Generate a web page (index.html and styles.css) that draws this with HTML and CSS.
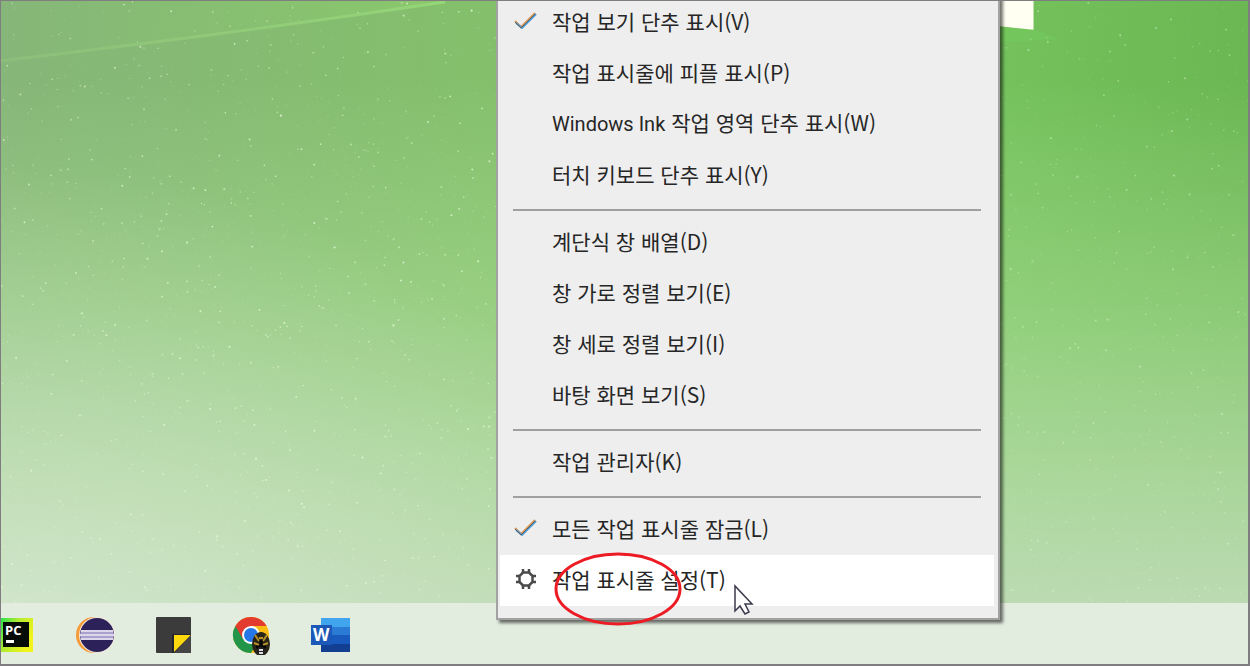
FILE: index.html
```html
<!DOCTYPE html>
<html lang="ko">
<head>
<meta charset="utf-8">
<title>작업 표시줄 메뉴</title>
<link rel="stylesheet" href="styles.css">
</head>
<body>
<main class="desktop">
  <svg class="wallpaper" viewBox="0 0 1250 666" preserveAspectRatio="none" aria-hidden="true">
    <defs>
      <linearGradient id="beam"><stop offset="0" stop-color="#9ad080" stop-opacity=".3"/><stop offset="1" stop-color="#96d878" stop-opacity=".9"/></linearGradient>
      <linearGradient id="glow"><stop offset="0" stop-color="#8cc474" stop-opacity="0"/><stop offset="1" stop-color="#8ccb6c" stop-opacity=".7"/></linearGradient>
    </defs>
    <path d="M0 0H450L0 60Z" fill="url(#glow)"/>
    <path d="M0 60Q230 33 445 1" fill="none" stroke="url(#beam)" stroke-width="3"/>
    <path d="M990 24L1036 29L1060 38L1000 42Z" fill="#72cb5c" opacity=".5"/>
    <path d="M990 0H1035V29L990 24Z" fill="#fffff2"/>
    <g id="specks" fill="#e2f9d4"></g>
  </svg>

  <nav class="taskbar" aria-label="작업 표시줄">
    <button class="app" aria-label="PyCharm">
      <svg viewBox="0 0 40 40"><defs><linearGradient id="pc" x2="1" y2=".5"><stop offset="0" stop-color="#12e052"/><stop offset=".5" stop-color="#b4ec30"/><stop offset="1" stop-color="#f2f21c"/></linearGradient></defs>
        <path d="M0 3H35V37H0Z" fill="url(#pc)"/><path d="M5 7H31V32H5Z" fill="#070b08"/><text x="7" y="20" class="pc-text">PC</text><path d="M8 25H16V28H8Z" fill="#fff"/></svg>
    </button>
    <button class="app" aria-label="Eclipse">
      <svg viewBox="0 0 40 40"><circle cx="18" cy="20" r="18" fill="#f49a36"/><circle cx="21" cy="20" r="18" fill="#f3e8dc"/><circle cx="21" cy="20" r="17" fill="#2c2158"/><path d="M5 15H37L38 20L37 25H5L4 20Z" fill="#a9a0cb"/><path d="M5 16H37M4 20H38M5 24H37" stroke="#dcd7ea" stroke-width="2"/></svg>
    </button>
    <button class="app" aria-label="스티커 메모">
      <svg viewBox="0 0 40 40"><rect x="2" y="2" width="35" height="36" rx="1" fill="#3b3b3b"/><path d="M18 19H37V38H18Z" fill="#24242c"/><path d="M20 20H37L20 37Z" fill="#ffd80d"/><path d="M37 20V38H20Z" fill="#454545"/></svg>
    </button>
    <button class="app" aria-label="Chrome">
      <svg viewBox="0 0 40 40"><circle cx="19" cy="20" r="18" fill="#fbbc12"/><path d="M19 20L3.400 11A18 18 0 0 0 19 38L27 24Z" fill="#229548"/><path d="M19 11H34.600A18 18 0 0 0 3.400 11L11 24Z" fill="#e33b2e"/><circle cx="19" cy="20" r="9" fill="#fff"/><circle cx="19" cy="20" r="7" fill="#2677e8"/>
        <ellipse cx="29" cy="29" rx="9" ry="12" fill="#292416"/><path d="M23 20L27 26M35 20L31 26M22 28L27 30M36 28L31 30M27 23H31" stroke="#b7922a" stroke-width="2"/><path d="M29 25V34M24 32H34" stroke="#080808" stroke-width="3"/><ellipse cx="29" cy="36" rx="4" ry="4" fill="#222"/><path d="M27 35H31M27 38H31" stroke="#ddd" stroke-width="2"/></svg>
    </button>
    <button class="app" aria-label="Word">
      <svg viewBox="0 0 40 40"><path d="M11 3H40V12H11Z" fill="#40a5ed"/><path d="M11 12H40V20H11Z" fill="#2b7bd5"/><path d="M11 20H40V29H11Z" fill="#185abd"/><path d="M11 29H40V37H11Z" fill="#123f91"/><path d="M1 10H22V30H1Z" fill="#1b58b8"/><text x="3" y="26" class="word-text">W</text></svg>
    </button>
  </nav>

  <div class="menu" role="menu">
    <button class="item" role="menuitem"><svg class="mark" viewBox="0 0 24 24"><use href="#check"/></svg>작업 보기 단추 표시(V)</button>
    <button class="item" role="menuitem"><span class="mark"></span>작업 표시줄에 피플 표시(P)</button>
    <button class="item" role="menuitem"><span class="mark"></span><span><span class="latin">Windows Ink</span> 작업 영역 단추 표시(W)</span></button>
    <button class="item" role="menuitem"><span class="mark"></span>터치 키보드 단추 표시(Y)</button>
    <hr class="separator">
    <button class="item" role="menuitem"><span class="mark"></span>계단식 창 배열(D)</button>
    <button class="item" role="menuitem"><span class="mark"></span>창 가로 정렬 보기(E)</button>
    <button class="item" role="menuitem"><span class="mark"></span>창 세로 정렬 보기(I)</button>
    <button class="item" role="menuitem"><span class="mark"></span>바탕 화면 보기(S)</button>
    <hr class="separator">
    <button class="item" role="menuitem"><span class="mark"></span>작업 관리자(K)</button>
    <hr class="separator">
    <button class="item" role="menuitem"><svg class="mark" viewBox="0 0 24 24"><g id="check" fill="none"><path d="M1 12L7 18L21 4" stroke="#e09a5a" stroke-width="2"/><path d="M2 14L8 19L22 5" stroke="#4a9ad6" stroke-width="2"/><path d="M1 13L7 19L21 5" stroke="#66605a" stroke-width="1"/></g></svg>모든 작업 표시줄 잠금(L)</button>
    <button class="item active" role="menuitem"><svg class="mark" viewBox="0 0 24 24"><g fill="none" stroke="#4a4a4a"><path d="M9 5.500H15L18.500 9V15L15 18.500H9L5.500 15V9Z" stroke-width="2.500"/><path d="M9 6V2M15 6V2M9 18V22M15 18V22M6 9H2M6 15H2M18 9H22M18 15H22" stroke-width="2.500"/></g></svg>작업 표시줄 설정(T)</button>
  </div>

  <svg class="annotation" viewBox="0 0 128 76" aria-hidden="true"><ellipse cx="64" cy="38" rx="62" ry="35" fill="none" stroke="#ed1c24" stroke-width="3"/></svg>
  <svg class="pointer" viewBox="0 0 24 34" aria-hidden="true"><path d="M3 3V28L8 23L13 31L17 29L13 21H20Z" fill="#fff" stroke="#3a3a4c" stroke-width="1.500"/></svg>
</main>
<script src="specks.js"></script>
</body>
</html>
```
FILE: styles.css
```css
* { box-sizing: border-box; }

body { margin: 0; }

.desktop {
  position: relative;
  display: flex;
  flex-direction: column;
  justify-content: flex-end;
  min-height: 100vh;
  overflow: hidden;
  border: 2px solid #807d80;
  border-width: 1px 2px 2px 1px;
  background:
    radial-gradient(ellipse 55% 75% at 0% 100%, rgb(232 242 228 / 50%), rgb(220 238 212 / 0%)),
    linear-gradient(to bottom, rgb(170 222 150 / 0%) 12%, rgb(172 222 152 / 48%) 45%, rgb(188 222 176 / 80%) 75%, #c4dcbe 100%),
    linear-gradient(to right, #86b679, #84c06b 40%, #75c25d 80%, #6bb753);
}

.wallpaper {
  position: absolute;
  inset: 0;
  width: 100%;
  height: 100%;
}

.taskbar {
  position: relative;
  display: flex;
  align-items: center;
  gap: 38px;
  height: 61px;
  padding: 3px 0 0;
  background: #e2ede0;
}

.app {
  width: 40px;
  height: 40px;
  padding: 0;
  border: 0;
  background: none;
}

.app:first-child { margin-left: -3px; }

.app svg { display: block; width: 40px; height: 40px; }

.pc-text { font: bold 13px "Open Sans", sans-serif; fill: #fff; }
.word-text { font: bold 17px "Open Sans", sans-serif; fill: #fff; }

.menu {
  position: absolute;
  left: 495px;
  bottom: 44px;
  width: 504px;
  padding: 2px 4px 12px 2px;
  border: 2px solid #a2a2a2;
  background: #eee;
  box-shadow: 3px 3px 3px rgb(0 0 0 / 55%);
}

.item {
  display: flex;
  align-items: center;
  gap: 14px;
  width: 100%;
  height: 51px;
  padding: 0 14px 4px;
  border: 0;
  background: none;
  color: #262626;
  font: 21px/28px "Noto Sans CJK KR", sans-serif;
  text-align: left;
  white-space: nowrap;
}

.item.active { background: #fff; }

.latin { font: 20px/28px Roboto, sans-serif; }

.mark { flex: none; width: 24px; height: 24px; }

.separator {
  height: 2px;
  margin: 8px 13px 6px;
  border: 0;
  background: #a0a0a0;
}

.annotation {
  position: absolute;
  left: 553px;
  top: 550px;
  width: 128px;
  height: 76px;
}

.pointer {
  position: absolute;
  left: 731px;
  top: 582px;
  width: 24px;
  height: 34px;
}
```
FILE: specks.js
```js
const layer = document.getElementById("specks");
let seed = 41;
const random = () => (seed = (seed * 16807) % 2147483647) / 2147483647;
for (let i = 0; i < 5200; i++) {
  const dot = document.createElementNS("http://www.w3.org/2000/svg", "circle");
  const x = random() * 1250;
  dot.setAttribute("cx", x);
  dot.setAttribute("cy", Math.pow(random(), 0.8) * 604);
  dot.setAttribute("r", 0.5 + random() * 0.6);
  dot.setAttribute("opacity", (0.1 + Math.pow(random(), 3) * 0.8) * (x > 1000 ? 0.6 : 1));
  layer.append(dot);
}
```
